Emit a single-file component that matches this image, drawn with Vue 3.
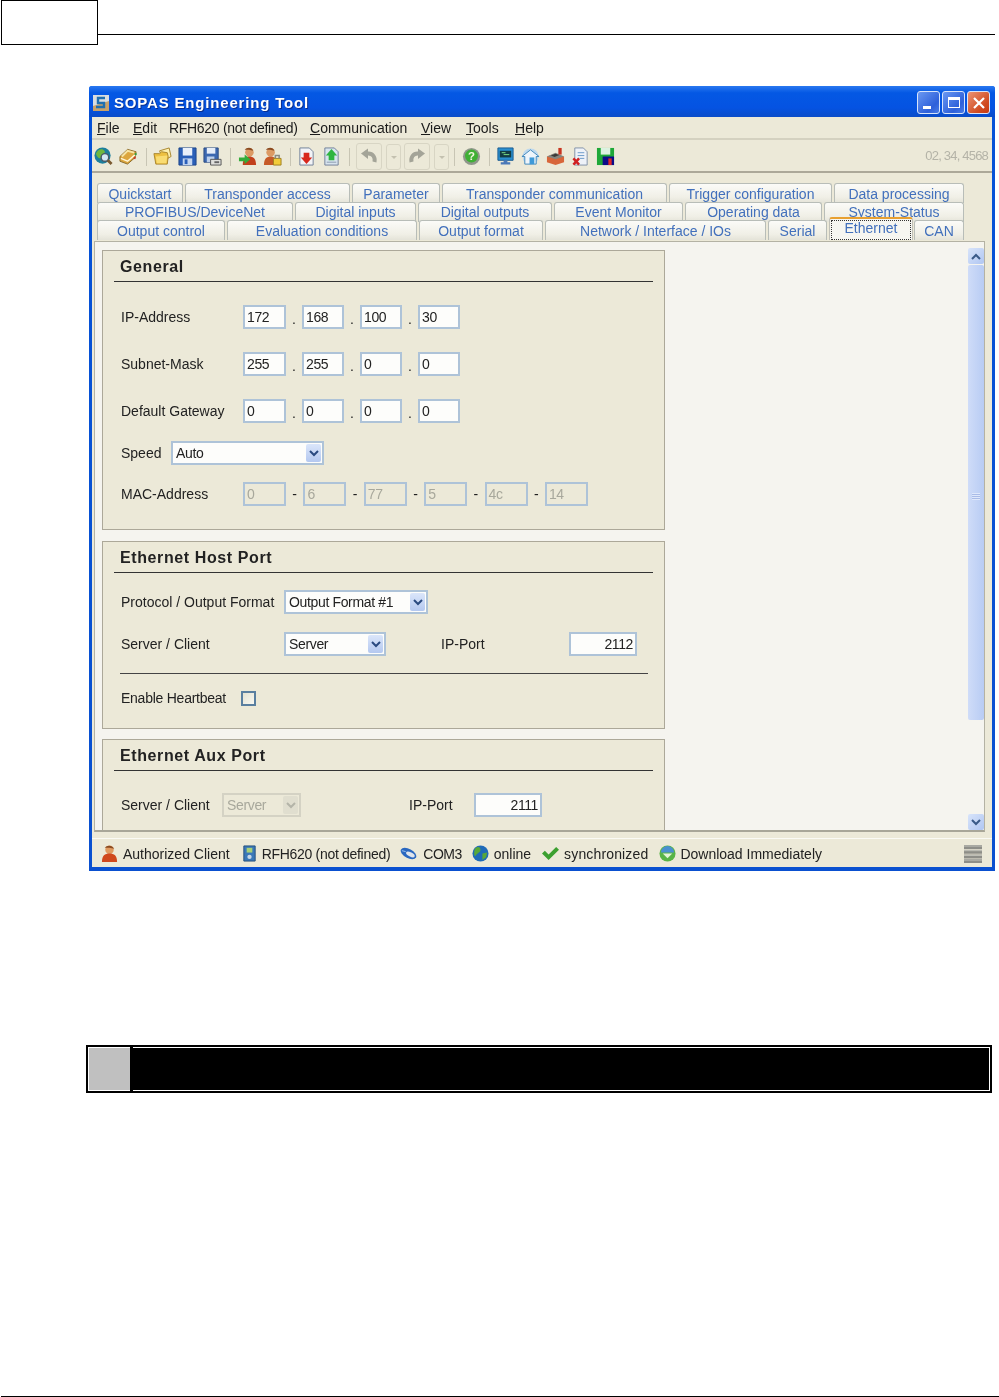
<script setup>
// tab rows: [label, width]
const tabRows = [
  [['Quickstart', 86], ['Transponder access', 165], ['Parameter', 88], ['Transponder communication', 225], ['Trigger configuration', 163], ['Data processing', 130]],
  [['PROFIBUS/DeviceNet', 196], ['Digital inputs', 121], ['Digital outputs', 134], ['Event Monitor', 129], ['Operating data', 137], ['System-Status', 140]],
  [['Output control', 128], ['Evaluation conditions', 190], ['Output format', 124], ['Network / Interface / IOs', 221], ['Serial', 59], ['Ethernet', 84], ['CAN', 50]]
]
// menu: [mnemonic, rest, width up to the next entry]
const menu = [
  ['F', 'ile', 36], ['E', 'dit', 36], ['', 'RFH620 (not defined)', 141], ['C', 'ommunication', 111], ['V', 'iew', 45], ['T', 'ools', 49], ['H', 'elp', 40]
]
const ipRows = [
  ['IP-Address', ['172', '168', '100', '30']],
  ['Subnet-Mask', ['255', '255', '0', '0']],
  ['Default Gateway', ['0', '0', '0', '0']]
]
const mac = ['0', '6', '77', '5', '4c', '14']
</script>

<template>
  <div class="page">
    <header class="page-head">
      <div class="page-num"></div>
      <div class="page-rule"></div>
    </header>

    <div class="win">
      <div class="title">
        <svg class="app-ico" width="18" height="18" viewBox="0 0 18 18">
          <rect x="1" y="1" width="16" height="16" fill="#d8dde0"/>
          <path d="M1 12 17 7v10H1z" fill="#c9a26a"/>
          <path d="M13 4H6v5h6v4H4" fill="none" stroke="#1f6fb0" stroke-width="2.4"/>
        </svg>
        <span class="title-text">SOPAS Engineering Tool</span>
        <div class="win-btns">
          <span class="wb"><i class="wb-min"></i></span>
          <span class="wb"><i class="wb-max"></i></span>
          <span class="wb wb-close">
            <svg width="14" height="14" viewBox="0 0 14 14"><path d="M2 2l10 10M12 2 2 12" stroke="#fff" stroke-width="2.2"/></svg>
          </span>
        </div>
      </div>

      <div class="inner">
        <nav class="menu">
          <span v-for="m in menu" :key="m[1]" :class="{ narrow: !m[0] }" :style="{ width: m[2] + 'px' }"><u>{{ m[0] }}</u>{{ m[1] }}</span>
        </nav>

        <div class="toolbar">
          <svg class="ti" viewBox="0 0 20 20"><circle cx="9" cy="9" r="8.500" fill="#1d7f9c"/><path d="M2 7c2-5 7-6 9-3s-3 3-3 6-4 3-6-3z" fill="#6fb83e"/><circle cx="11.500" cy="11" r="4" fill="#d4e8f4" stroke="#4a5a68" stroke-width="1.500"/><path d="M14.500 14l4 4" stroke="#7a5a30" stroke-width="3"/></svg>
          <svg class="ti" viewBox="0 0 20 20"><path d="M1 10 9 2.500l9 2.500-1 6-8 7-8-3z" fill="#dca63e" stroke="#8a6a28"/><path d="M3 10l6-6 7 2" fill="none" stroke="#f6e4a4" stroke-width="2"/><path d="M2 12l7 3 8-7" fill="none" stroke="#fff6d8" stroke-width="1.500"/><path d="M17 6l2 1-1 2-2-1z" fill="#3a9a3a"/><path d="M16 10l2 1-1 2-2-1z" fill="#c83a2a"/></svg>
          <i class="sep"></i>
          <svg class="ti" viewBox="0 0 20 20"><path d="M7 4l10-3 2 9-9 5z" fill="#fdf0b0" stroke="#a8842a"/><path d="M1 7h6l2-2 6 1 1 4-1 8H3z" fill="#edc040" stroke="#a8842a"/><path d="M3 10l12-1-1 8H4z" fill="#f9dc72"/></svg>
          <svg class="ti" viewBox="0 0 20 20"><path d="M1 1h18v18H1z" fill="#2a5fb8" stroke="#1c4488"/><path d="M5 1h10v8H5z" fill="#eaf0fa"/><path d="M5 12h10v7H5z" fill="#c4d6f0"/><path d="M7 13h3v5H7z" fill="#2a5fb8"/></svg>
          <svg class="ti" viewBox="0 0 20 20"><path d="M1 1h15v15H1z" fill="#3c68b0" stroke="#2a4a80"/><path d="M4 1h9v6H4z" fill="#e6edf8"/><path d="M4 10h8v6H4z" fill="#bcd0ec"/><path d="M8 13h11v6H8z" fill="#e0e0dc" stroke="#555"/><path d="M12 15h5v2h-5z" fill="#666"/></svg>
          <i class="sep"></i>
          <svg class="ti" viewBox="0 0 20 20"><circle cx="12" cy="5.500" r="4.500" fill="#dc9a64"/><path d="M7 3c2-3 8-3 9 1-3-1-6-1-9-1z" fill="#8a4a20"/><path d="M5 19c0-7 3-9 7-9s7 2 7 9z" fill="#c2401c"/><path d="M1 11h6V8l6 5-6 5v-3H1z" fill="#33ad3a"/></svg>
          <svg class="ti" viewBox="0 0 20 20"><circle cx="8" cy="5.500" r="4.500" fill="#dc9a64"/><path d="M3 3c2-3 8-3 9 1-3-1-6-1-9-1z" fill="#8a4a20"/><path d="M1 19c0-7 3-9 7-9s7 2 7 9z" fill="#c65a28"/><path d="M11 12h8v7h-8z" fill="#f2cc3a" stroke="#a08020"/><path d="M13 12V9h4v3" fill="none" stroke="#8a8a80" stroke-width="1.600"/></svg>
          <i class="sep"></i>
          <svg class="ti" viewBox="0 0 20 20"><path d="M3 1h10l4 4v14H3z" fill="#f2f3f6" stroke="#707f98"/><path d="M7 6h6v5h3l-6 7-6-7h3z" fill="#d8281c"/></svg>
          <svg class="ti" viewBox="0 0 20 20"><path d="M3 1h10l4 4v14H3z" fill="#d8e4ee" stroke="#707f98"/><path d="M7 14V9H4l6-7 6 7h-3v5z" fill="#2fb540"/><path d="M5 16h10" stroke="#8a9ab0"/></svg>
          <i class="sep"></i>
          <span class="tb-btn first">
            <svg width="20" height="20" viewBox="0 0 20 20"><path d="M15.500 15c1-5-2-8.500-6-8.500H7" fill="none" stroke="#a4a498" stroke-width="4"/><path d="M9 1.500V12L2 6.500z" fill="#a4a498"/></svg>
          </span>
          <span class="tb-drop"></span>
          <span class="tb-btn">
            <svg width="20" height="20" viewBox="0 0 20 20"><path d="M4.500 15c-1-5 2-8.500 6-8.500H13" fill="none" stroke="#a4a498" stroke-width="4"/><path d="M11 1.500V12l7-5.500z" fill="#a4a498"/></svg>
          </span>
          <span class="tb-drop"></span>
          <i class="sep sep-tight"></i>
          <svg class="ti" viewBox="0 0 20 20"><circle cx="10" cy="10" r="9" fill="#8f978a"/><circle cx="10" cy="9.500" r="6.800" fill="#3fb034"/><text x="10" y="14" font-size="12" font-weight="700" font-family="Liberation Sans" text-anchor="middle" fill="#f4f8e0">?</text></svg>
          <i class="sep"></i>
          <svg class="ti" viewBox="0 0 20 20"><path d="M2 1h16v13H2z" fill="#2a8fd0" stroke="#1c5c90"/><path d="M4 4h12v7H4z" fill="#123c44"/><path d="M6 6h4M8 8h6" stroke="#7ee08a"/><path d="M8 14h4v2h3v2.500H5V16h3z" fill="#4a78b8"/></svg>
          <svg class="ti" viewBox="0 0 20 20"><circle cx="10" cy="10" r="8.500" fill="#bcd8ee"/><path d="M1 10 10 3l9 7h-3v8H4v-8z" fill="#eef5fb" stroke="#3f88bc"/><path d="M9 11h5v7H9z" fill="#3f9ad8"/></svg>
          <svg class="ti" viewBox="0 0 20 20"><path d="M1 10l8-3 10 3v6l-9 3-9-3z" fill="#d8663a"/><path d="M1 10l9 3 9-3-9-4z" fill="#85857e"/><path d="M5 9l5-2 4 1.500-5 2z" fill="#3a3a38"/><path d="M13 1h3.500v7H13z" fill="#c8341f"/></svg>
          <svg class="ti" viewBox="0 0 20 20"><path d="M4 1h9l4 4v14H4z" fill="#eef2f8" stroke="#7f90a8"/><path d="M7 6h7M7 9h7M9 12h5" stroke="#6a9ac8"/><path d="M2.500 12l6 6.500M8.500 12l-6 6.500" stroke="#d02020" stroke-width="2.600"/></svg>
          <svg class="ti" viewBox="0 0 20 20"><path d="M1 1h18v18H1z" fill="#1ea838"/><path d="M5 1h10v7H5z" fill="#dcf2e0"/><path d="M7 10h12v9H7z" fill="#0c0c88"/><path d="M13 12h3.500v7H13z" fill="#e02828"/></svg>
          <span class="coords">02, 34, 4568</span>
        </div>

        <div class="tabs">
          <div v-for="(row, r) in tabRows" :key="r" class="tab-row">
            <span
              v-for="t in row"
              :key="t[0]"
              class="tab"
              :class="{ active: t[0] === 'Ethernet' }"
              :style="{ width: t[1] + 'px' }"
            ><em>{{ t[0] }}</em></span>
          </div>
        </div>

        <div class="panel">
          <div class="groups">
            <section class="group g-general">
              <h3>General</h3>
              <div v-for="r in ipRows" :key="r[0]" class="row ip-row">
                <label class="lbl-ip">{{ r[0] }}</label>
                <template v-for="(v, j) in r[1]" :key="j">
                  <span v-if="j" class="dot">.</span>
                  <span class="field" :class="{ first: !j }">{{ v }}</span>
                </template>
              </div>
              <div class="row speed-row">
                <label class="lbl-speed">Speed</label>
                <span class="select w-speed">Auto<b class="arrow"><svg width="10" height="7" viewBox="0 0 10 7"><path d="M1 1l4 4 4-4" fill="none" stroke="#2a4a80" stroke-width="2"/></svg></b></span>
              </div>
              <div class="row mac-row">
                <label class="lbl-ip">MAC-Address</label>
                <template v-for="(v, j) in mac" :key="j">
                  <span v-if="j" class="dash">-</span>
                  <span class="field off" :class="{ first: !j }">{{ v }}</span>
                </template>
              </div>
            </section>

            <section class="group g-host">
              <h3>Ethernet Host Port</h3>
              <div class="row proto-row">
                <label class="lbl-port">Protocol / Output Format</label>
                <span class="select w-proto">Output Format #1<b class="arrow"><svg width="10" height="7" viewBox="0 0 10 7"><path d="M1 1l4 4 4-4" fill="none" stroke="#2a4a80" stroke-width="2"/></svg></b></span>
              </div>
              <div class="row server-row">
                <label class="lbl-port">Server / Client</label>
                <span class="select w-server">Server<b class="arrow"><svg width="10" height="7" viewBox="0 0 10 7"><path d="M1 1l4 4 4-4" fill="none" stroke="#2a4a80" stroke-width="2"/></svg></b></span>
                <label class="lbl-ipport">IP-Port</label>
                <span class="field num">2112</span>
              </div>
              <hr class="divider" />
              <div class="row hb-row">
                <label class="lbl-hb">Enable Heartbeat</label>
                <span class="check"></span>
              </div>
            </section>

            <section class="group g-aux">
              <h3>Ethernet Aux Port</h3>
              <div class="row aux-row">
                <label class="lbl-aux">Server / Client</label>
                <span class="select off w-aux">Server<b class="arrow"><svg width="10" height="7" viewBox="0 0 10 7"><path d="M1 1l4 4 4-4" fill="none" stroke="#b4b4a8" stroke-width="2"/></svg></b></span>
                <label class="lbl-auxport">IP-Port</label>
                <span class="field num">2111</span>
              </div>
            </section>
          </div>

          <div class="scroll">
            <span class="sb-btn"><svg width="10" height="7" viewBox="0 0 10 7"><path d="M1 6l4-4 4 4" fill="none" stroke="#3a5a88" stroke-width="2"/></svg></span>
            <div class="sb-thumb"><i></i></div>
            <span class="sb-btn"><svg width="10" height="7" viewBox="0 0 10 7"><path d="M1 1l4 4 4-4" fill="none" stroke="#3a5a88" stroke-width="2"/></svg></span>
          </div>
        </div>

        <footer class="status">
          <svg class="si m-a" viewBox="0 0 18 18"><circle cx="9" cy="5" r="4.500" fill="#e09a60"/><path d="M4 3c2-3 8-3 10 1-3-1-7-1-10-1z" fill="#8a4a20"/><path d="M1 18c0-7 3-9 8-9s8 2 8 9z" fill="#d0481c"/></svg>
          <span>Authorized Client</span>
          <svg class="si m-b" viewBox="0 0 18 18"><path d="M3 1h12v16H3z" fill="#3a78b8" stroke="#24507c"/><path d="M6 3h6v5H6z" fill="#a8d078"/><circle cx="9" cy="12.500" r="2.300" fill="#c8d8e8"/></svg>
          <span class="t-rfh">RFH620 (not defined)</span>
          <svg class="si m-c" viewBox="0 0 18 18"><ellipse cx="9" cy="9" rx="9" ry="4.800" transform="rotate(28 9 9)" fill="#2a68c0"/><ellipse cx="11" cy="10" rx="5" ry="2.200" transform="rotate(28 11 10)" fill="#dfe4ec"/><path d="M2 6l4 1" stroke="#9cc4f0"/></svg>
          <span class="t-com">COM3</span>
          <svg class="si m-d" viewBox="0 0 18 18"><circle cx="9" cy="9" r="8.500" fill="#1f6ab8"/><path d="M3 4c3-3 6-2 6 1s-3 3-5 6-2-4-1-7zM11 9l5-1-1 5-4 3z" fill="#58a838"/></svg>
          <span>online</span>
          <svg class="si m-e" viewBox="0 0 18 18"><path d="M0 9l3-3 4 4 8-8 3 3-11 11z" fill="#3ca030"/></svg>
          <span class="t-sync">synchronized</span>
          <svg class="si m-f" viewBox="0 0 18 18"><circle cx="9" cy="9" r="8.500" fill="#58b446"/><path d="M2 8a7 7 0 0 1 14 0z" fill="#4a90d0"/><path d="M4 9h10l-5 5z" fill="#e4f4d8"/></svg>
          <span>Download Immediately</span>
          <svg class="db" viewBox="0 0 18 18"><path d="M0 0h18v4H0zM0 4.700h18v4H0zM0 9.400h18v4H0zM0 14h18v4H0z" fill="#8e8e88"/><path d="M0 1h18M0 5.700h18M0 10.400h18M0 15h18" stroke="#c4c4bc"/></svg>
        </footer>
      </div>
    </div>

    <div class="bar">
      <div class="bar-num"></div>
      <div class="bar-fill"></div>
    </div>

    <div class="page-foot"></div>
  </div>
</template>

<style>
html, body { background: #fff; }
</style>

<style scoped>
.page { width: 999px; height: 1397px; position: relative; overflow: hidden; background: #fff; font-family: "Liberation Sans", Arial, sans-serif; }

.page-head { display: flex; height: 45px; padding-left: 1px; }
.page-num { width: 97px; height: 45px; box-sizing: border-box; border: 1px solid #000; }
.page-rule { width: 897px; height: 34px; border-bottom: 1px solid #000; }

.win {
  width: 906px; height: 785px; margin: 41px 0 0 89px; box-sizing: border-box;
  display: flex; flex-direction: column;
  background: linear-gradient(#0a5fe8, #0552d8 12px, #0a50d0);
  border-radius: 3px 3px 0 0; filter: blur(0.4px);
}
.title { height: 31px; display: flex; align-items: center; padding: 2px 5px 0 3px; box-sizing: border-box; flex: none; background: linear-gradient(#2a78f0, #0458e4 22%, #0553e2 70%, #0a4cc8); border-radius: 3px 3px 0 0; }
.app-ico { flex: none; margin-right: 4px; }
.title-text { color: #fff; font-size: 15px; font-weight: 700; letter-spacing: 0.82px; text-shadow: 1px 1px 0 #0a2f90; }
.win-btns { margin-left: auto; display: flex; gap: 2px; }
.wb { width: 23px; height: 23px; box-sizing: border-box; border: 1px solid #d8e4fa; border-radius: 3px; background: linear-gradient(135deg, #6a98f2, #2e60da 70%, #4a7ce6); position: relative; display: flex; align-items: center; justify-content: center; }
.wb-close { background: linear-gradient(135deg, #ec9474, #d04a20 70%, #c83a12); }
.wb-min { position: absolute; left: 5px; bottom: 4px; width: 8px; height: 3px; background: #fff; }
.wb-max { width: 12px; height: 11px; box-sizing: border-box; border: 1px solid #fff; border-top-width: 3px; }

.inner { flex: 1; margin: 0 3px 4px; background: #ece9d8; display: flex; flex-direction: column; min-height: 0; }

.menu { height: 23px; display: flex; align-items: center; padding-left: 5px; font-size: 14px; color: #1a1a1a; flex: none; border-bottom: 2px solid #d4d1c0; box-sizing: border-box; }
.menu span { flex: none; white-space: nowrap; }
.menu .narrow { letter-spacing: -0.3px; }

.toolbar { height: 33px; display: flex; align-items: center; flex: none; padding-top: 2px; border-bottom: 2px solid #aca899; box-sizing: border-box; }
.ti { width: 19px; height: 19px; flex: none; margin: 0 3px; }
.ti:first-child { margin-left: 1.5px; }
.sep { width: 1px; height: 18px; background: #c8c5b4; margin: 0 3.5px 0 5px; flex: none; }
.sep-tight { margin-left: 2px; }
.tb-btn { width: 26px; height: 27px; box-sizing: border-box; border: 1px solid #d8d5c4; border-radius: 3px; display: flex; align-items: center; justify-content: center; flex: none; }
.tb-btn.first { margin-left: 2.5px; }
.tb-drop { width: 15px; height: 26px; box-sizing: border-box; border: 1px solid #d8d5c4; border-radius: 3px; margin: 0 3px 0 4px; flex: none; position: relative; }
.tb-drop::after { content: ""; position: absolute; left: 4px; top: 11px; border: 3px solid transparent; border-top-color: #c4c1b0; }
.coords { margin: 0 4px 3px auto; font-size: 13px; letter-spacing: -0.8px; color: #b4b3a7; }

.tabs { flex: none; padding: 10px 0 0 5px; height: 68px; box-sizing: border-box; position: relative; z-index: 1; }
.tab-row { display: flex; gap: 2px; height: 18.5px; }
.tab { box-sizing: border-box; height: 20px; border: 1px solid #b8bdb8; border-bottom: none; border-radius: 3px 3px 0 0; background: linear-gradient(#fbfbf8, #f0efe6 70%, #e4e3d8); display: flex; justify-content: center; align-items: center; font-size: 14px; color: #4270bc; }
.tab em { font-style: normal; }
.tab.active { height: 23px; margin: -3px -1px 0 0; background: #f6f6f1; border-top: 2px solid #e8a030; border-color: #e8a030 #c0c0b8 transparent; position: relative; padding-bottom: 3px; }
.tab.active::after { content: ""; position: absolute; left: 1px; right: 1px; top: 1px; bottom: 0; border: 1px dotted #333; }

.panel { flex: none; height: 591px; margin: 0 7px 0 2px; box-sizing: border-box; border: 1px solid #b4b2a4; border-bottom: 2px solid #a8a698; background: #f5f4ef; overflow: hidden; display: flex; padding: 8px 0 0 7px; }
.groups { width: 563px; flex: none; }

.group { box-sizing: border-box; width: 563px; border: 1px solid #aca899; background: #ece9d8; margin-bottom: 11px; padding: 0 11px; font-size: 14px; color: #222; }
.group h3 { margin: 0; height: 30px; line-height: 32px; padding-left: 6px; font-size: 16px; font-weight: 700; letter-spacing: 0.6px; color: #222; border-bottom: 1px solid #333; }
.g-general { height: 280px; }
.g-host { height: 188px; margin-bottom: 10px; }
.g-aux { height: 120px; margin-bottom: 0; }

.row { display: flex; align-items: center; height: 24px; padding-left: 7px; }
.ip-row { margin-top: 23px; }
.speed-row { margin-top: 18px; }
.mac-row { margin-top: 17px; }
.proto-row { margin-top: 17px; }
.server-row { margin-top: 18px; }
.hb-row { margin-top: 12px; }
.aux-row { margin-top: 22px; }

.lbl-ip { width: 122px; flex: none; }
.lbl-speed { width: 50px; flex: none; }
.lbl-port { width: 163px; flex: none; }
.lbl-ipport { margin-left: 55px; width: 128px; flex: none; }
.lbl-hb { width: 120px; flex: none; letter-spacing: -0.25px; }
.lbl-aux { width: 101px; flex: none; }
.lbl-auxport { margin-left: 108px; width: 65px; flex: none; }

.field { box-sizing: border-box; width: 42px; height: 24px; border: 2px solid #aec3d8; background: #fdfdfb; padding-left: 2px; line-height: 20px; font-size: 14px; letter-spacing: -0.4px; color: #222; flex: none; }
.field.first { width: 43px; }
.field.off { background: #ece9d8; color: #a8a89c; }
.field.num { width: 68px; text-align: right; padding: 0 2px 0 0; }
.mac-row .field { width: 43px; }
.dot { width: 16px; text-align: center; flex: none; padding-top: 4px; }
.dash { width: 17.4px; text-align: center; flex: none; }

.select { box-sizing: border-box; height: 24px; border: 2px solid #aec3d8; background: #fdfdfb; padding-left: 3px; line-height: 20px; letter-spacing: -0.35px; position: relative; flex: none; }
.select.off { background: #ece9d8; color: #a8a89c; border-color: #d4d2c4; }
.w-speed { width: 153px; }
.w-proto { width: 144px; }
.w-server { width: 102px; }
.w-aux { width: 79px; }
.arrow { position: absolute; right: 1px; top: 1px; width: 15px; height: 18px; border-radius: 2px; background: linear-gradient(#dbe6fa, #b4c8f0); display: flex; align-items: center; justify-content: center; }
.select.off .arrow { background: #e0decf; }

.divider { border: none; border-top: 1px solid #444; margin: 17px 5px 0 6px; height: 0; }
.check { width: 15px; height: 15px; box-sizing: border-box; border: 2px solid #5a7fa0; background: linear-gradient(135deg, #e4e2d2, #f8f8f2); flex: none; }

.scroll { width: 16px; margin-left: auto; margin-top: -2px; display: flex; flex-direction: column; flex: none; height: 582px; }
.sb-btn { height: 16px; flex: none; background: linear-gradient(135deg, #d8e4fa, #b0c6f2); border-radius: 2px; display: flex; align-items: center; justify-content: center; }
.sb-thumb { flex: 1; margin: 1px 0 94px; background: linear-gradient(90deg, #cfdcf8, #b8ccf4); border-radius: 2px; position: relative; }
.sb-thumb i { position: absolute; left: 4px; right: 4px; top: 50%; height: 7px; background: repeating-linear-gradient(#dfe8fb 0 1px, #a9bce8 1px 2px); }

.status { flex: 1; display: flex; align-items: center; font-size: 14px; color: #222; padding: 1px 10px 0 9px; margin-top: 6px; min-height: 0; border-top: 1px solid #fafaf4; }
.si { width: 17px; height: 17px; flex: none; }
.m-a { margin-right: 5px; }
.m-b { margin: 0 4px 0 11px; }
.m-c { margin: 0 6px 0 10px; }
.m-d { margin: 0 5px 0 10px; }
.m-e { margin: 0 5px 0 11px; }
.m-f { margin: 0 4px 0 11px; }
.t-rfh { letter-spacing: -0.3px; }
.t-com { letter-spacing: -0.5px; }
.t-sync { letter-spacing: 0.15px; }
.db { width: 18px; height: 18px; margin-left: auto; flex: none; }

.bar { position: absolute; left: 86px; top: 1045px; width: 906px; height: 48px; box-sizing: border-box; border: 2px solid #000; padding: 1px; display: flex; }
.bar-num { width: 41px; background: #c0c0c0; flex: none; }
.bar-fill { flex: 1; background: #000; position: relative; }
.bar-fill::before { content: ""; position: absolute; left: 0; top: -1px; bottom: -1px; width: 3px; background: #000; }

.page-foot { position: absolute; left: 1px; right: 0; top: 1396px; height: 1px; background: #000; }
</style>
